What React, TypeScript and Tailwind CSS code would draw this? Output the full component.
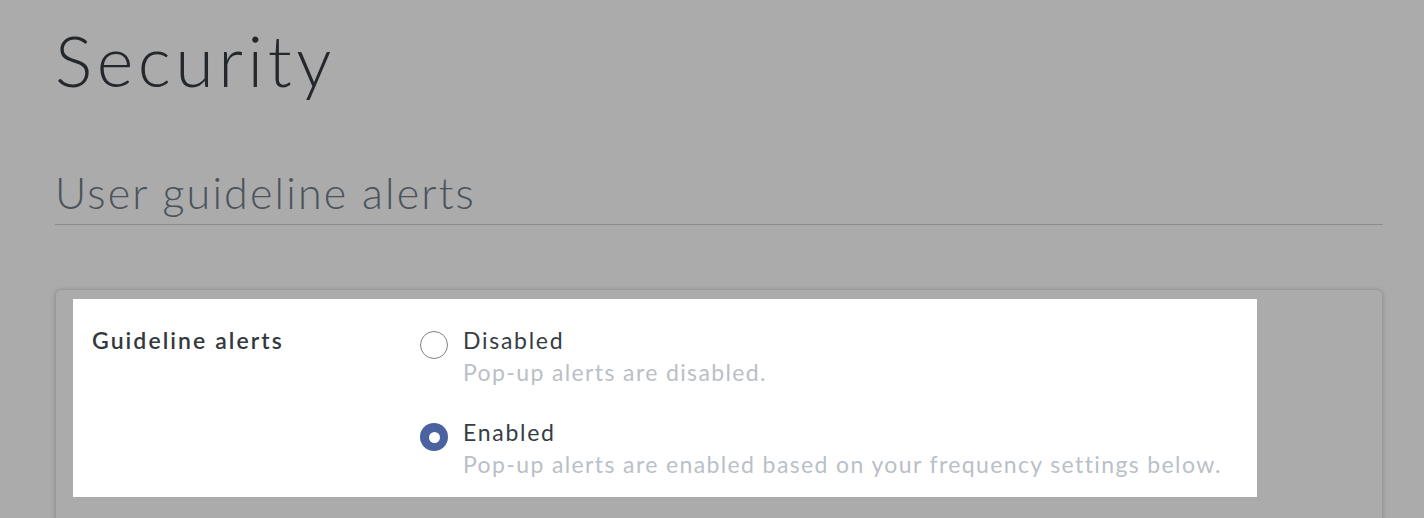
import { useState } from "react";

type Option = {
  value: string;
  label: string;
  hint: string;
};

const options: Option[] = [
  { value: "disabled", label: "Disabled", hint: "Pop-up alerts are disabled." },
  {
    value: "enabled",
    label: "Enabled",
    hint: "Pop-up alerts are enabled based on your frequency settings below.",
  },
];

function Radio({ checked }: { checked: boolean }) {
  if (checked) {
    return (
      <span className="mt-[7px] flex h-[28px] w-[28px] shrink-0 items-center justify-center rounded-full bg-[#4a62a0]">
        <span className="h-[11px] w-[11px] rounded-full bg-white" />
      </span>
    );
  }
  return (
    <span className="mt-[7px] h-[28px] w-[28px] shrink-0 rounded-full border-[1.5px] border-[#7d8287] bg-white" />
  );
}

export default function App() {
  const [value, setValue] = useState("enabled");

  return (
    <div className="min-h-screen overflow-hidden bg-white font-['Lato',sans-serif]">
      <div className="ml-[55px] w-[1328px]">
        <h1 className="mt-[25px] text-[70px] font-light leading-none tracking-[0.065em] text-[#363d44]">
          Security
        </h1>

        <h2 className="mt-[76px] border-b border-[#ced4da] pb-[10px] text-[43px] font-light leading-none tracking-[0.05em] text-[#717d88]">
          User guideline alerts
        </h2>

        <div className="mt-[64px] rounded-[6px] border border-[#e3e6e9] bg-white pb-16 pl-[17px] pt-[9px] shadow-[0_1px_5px_rgba(0,0,0,0.18)]">
          <div className="relative z-10 flex w-[1184px] bg-white pb-[17px] pl-[19px] pt-[25px] shadow-[0_0_0_9999px_rgba(0,0,0,0.33)]">
            <div className="w-[328px] text-[23px] font-semibold leading-[32px] tracking-[0.09em] text-[#33393e]">
              Guideline alerts
            </div>
            <div className="flex flex-col gap-[28px]">
              {options.map((o) => (
                <label
                  key={o.value}
                  className="flex cursor-pointer items-start gap-[15px]"
                  onClick={() => setValue(o.value)}
                >
                  <Radio checked={value === o.value} />
                  <span className="text-[23px] leading-[32px]">
                    <span className="block tracking-[0.075em] text-[#363d44]">
                      {o.label}
                    </span>
                    <span className="block tracking-[0.06em] text-[#b9c0c7]">
                      {o.hint}
                    </span>
                  </span>
                </label>
              ))}
            </div>
          </div>
        </div>
      </div>
    </div>
  );
}
